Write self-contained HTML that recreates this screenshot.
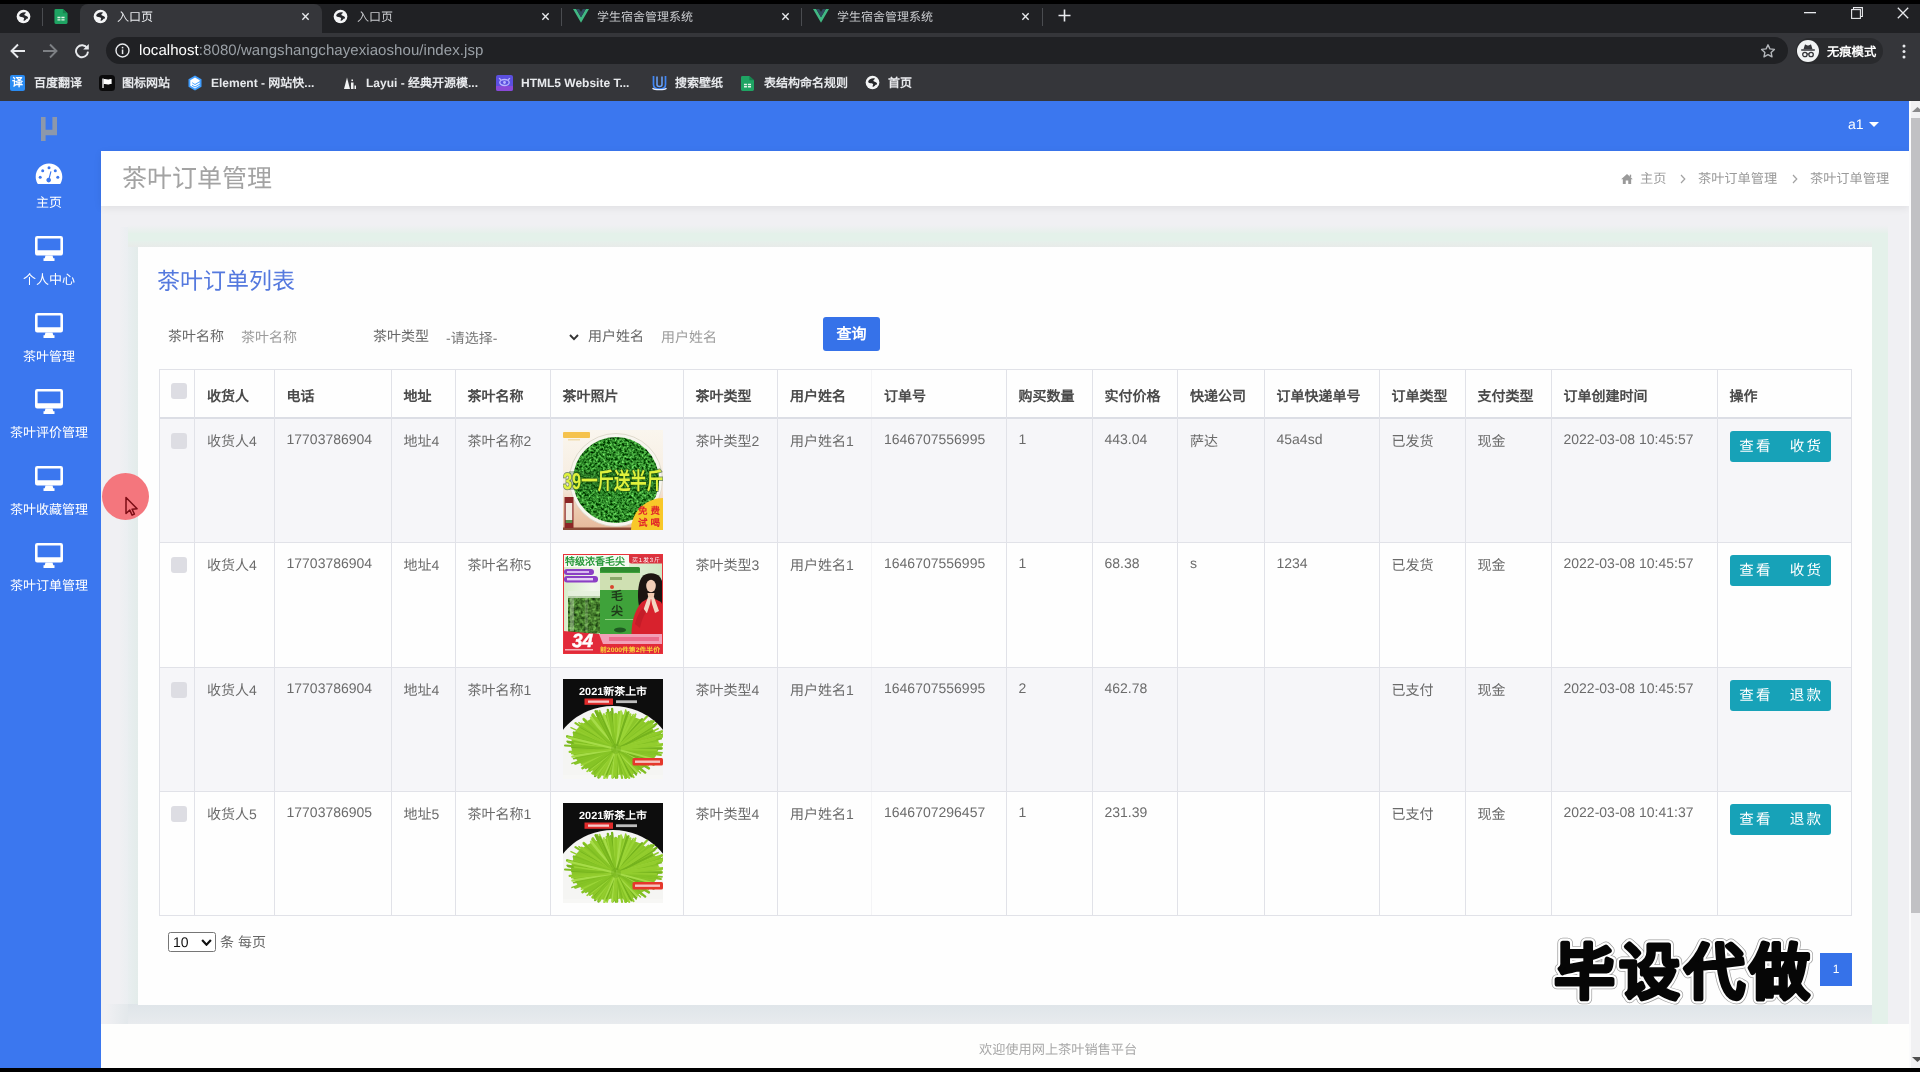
<!DOCTYPE html>
<html lang="zh-CN">
<head>
<meta charset="utf-8">
<title>茶叶订单管理</title>
<style>
*{box-sizing:border-box;margin:0;padding:0}
html,body{width:1920px;height:1072px;overflow:hidden;background:#000}
body{font-family:"Liberation Sans",sans-serif;position:relative;color:#333;-webkit-font-smoothing:antialiased;text-rendering:geometricPrecision}
.abs{position:absolute}
#root{position:absolute;left:0;top:0;width:1920px;height:1072px;overflow:hidden;background:#000;will-change:transform}
/* ===== browser chrome ===== */
#tabstrip{left:0;top:4px;width:1920px;height:30px;background:#202124}
#toolbar{left:0;top:33px;width:1920px;height:35px;background:#35363a}
#bookbar{left:0;top:67px;width:1920px;height:34px;background:#35363a}
.tab{top:4px;height:29px;color:#e8eaed;font-size:12px;line-height:25px}
.tab .ttl{position:absolute;top:1px;white-space:nowrap}
#omni{left:106px;top:37px;width:1682px;height:27px;border-radius:14px;background:#202124}
.bm{top:74px;height:18px;line-height:18px;font-size:12px;color:#e8eaed;white-space:nowrap;font-weight:bold}
/* ===== page ===== */
#page{left:0;top:101px;width:1909px;height:967px;background:#f0f0f3;overflow:hidden}
#topbar{left:0;top:0;width:1909px;height:50px;background:#3b77ef}
#side{left:0;top:0;width:101px;height:967px;background:#3b77ef}
.mi{left:0;width:98px;text-align:center;color:#fff;font-size:13px;line-height:16px;white-space:nowrap}
#titlebar{left:101px;top:50px;width:1808px;height:55px;background:#fff;box-shadow:0 2px 8px rgba(0,0,0,.07)}
#card{left:138px;top:146px;width:1734px;height:758px;background:#fefefe;}
.bc{top:69px;font-size:13.200px;line-height:18px;color:#9a9a9a;white-space:nowrap}

.fl{font-size:14px;line-height:20px;color:#666;white-space:nowrap}
.hl{left:159px;width:1693px;height:1px;background:#e1e2e8}
.vl{top:268px;width:1px;height:547px;background:#e1e2e8}
.th{font-size:14px;line-height:20px;font-weight:bold;color:#4a4a4a;white-space:nowrap}
.td{font-size:14px;line-height:20px;color:#6b6b6b;white-space:nowrap}
.cb{width:16px;height:16px;border-radius:3px;background:#dddde3}
.img{width:100px;height:100px;overflow:hidden;background:#8bb04a}
.btn{width:50px;height:31px;margin-top:1px;background:#17a2b8;color:#fff;font-size:14.500px;letter-spacing:2.300px;padding-left:2px;line-height:33px;text-align:center;white-space:nowrap}
.wm{left:1551px;top:923px;font-size:64px;line-height:94px;font-weight:bold;color:#050505;white-space:nowrap;letter-spacing:.5px;stroke-linejoin:round}
#footer{left:101px;top:923px;width:1808px;height:44px;background:#fefefd}
#scroll{left:1909px;top:101px;width:11px;height:967px;background:#f1f1f3}
</style>
</head>
<body>
<div id="root">
<!-- BROWSER CHROME -->
<div id="tabstrip" class="abs"></div>
<div id="toolbar" class="abs"></div>
<div id="bookbar" class="abs"></div>
<div id="omni" class="abs"></div>

<svg width="0" height="0" style="position:absolute">
 <defs>
  <symbol id="globe" viewBox="0 0 16 16">
   <circle cx="8" cy="8" r="7.300" fill="#f4f5f6"/>
   <path d="M3.400 6.800C3.800 4.600 7 3 10 3.400c.800.200.600 1-.200 1.500-1 .600-1.200 1.500-.200 2 1.200.500 2.800.700 3.200 2.100.200 1.200-.800 1.600-1.600 1.400-.600 1.200-1.600 2.200-2.800 2-.800-.200-.200-1.200.200-1.800.400-.800-.400-1.600-1.600-1.800-1.400-.200-3.800-.200-3.600-2z" fill="#26272b"/>
  </symbol>
  <symbol id="xx" viewBox="0 0 10 10"><path d="M1.500 1.500l7 7M8.500 1.500l-7 7" stroke="#e8eaed" stroke-width="1.500" fill="none"/></symbol>
  <symbol id="vue" viewBox="0 0 16 14"><path d="M0 0h3.200L8 8.300 12.800 0H16L8 13.800z" fill="#41b883"/><path d="M3.200 0h3L8 3.100 9.800 0h3L8 8.300z" fill="#2f495e"/></symbol>
  <symbol id="sheet" viewBox="0 0 14 16"><path d="M1.500 0H9l5 4.500V14.500a1.500 1.500 0 0 1-1.500 1.500h-11A1.500 1.500 0 0 1 0 14.500v-13A1.500 1.500 0 0 1 1.500 0z" fill="#1fa463"/><path d="M9 0l5 4.500H9z" fill="#16834d"/><path d="M3.200 8.300h3.200v1.500H3.200zm4.200 0h3.400v1.500H7.400zM3.200 10.800h3.200v1.500H3.200zm4.200 0h3.400v1.500H7.400z" fill="#e6f4ea"/></symbol>
 </defs>
</svg>
<!-- tabs -->
<svg class="abs" style="left:16px;top:9px" width="15" height="15"><use href="#globe"/></svg>
<div class="abs" style="left:42px;top:8px;width:1px;height:18px;background:#4a4c50"></div>
<svg class="abs" style="left:54px;top:8.500px" width="14" height="15"><use href="#sheet"/></svg>
<div class="abs" style="left:80px;top:4px;width:242px;height:30px;background:#35363a;border-radius:8px 8px 0 0"></div>
<svg class="abs" style="left:93px;top:9px" width="15" height="15"><use href="#globe"/></svg>
<div class="abs tab" style="left:117px"><span class="ttl">入口页</span></div>
<svg class="abs" style="left:301px;top:12px" width="9" height="9"><use href="#xx"/></svg>
<svg class="abs" style="left:333px;top:9px" width="15" height="15"><use href="#globe"/></svg>
<div class="abs tab" style="left:357px;color:#c8cacd"><span class="ttl">入口页</span></div>
<svg class="abs" style="left:541px;top:12px" width="9" height="9"><use href="#xx"/></svg>
<div class="abs" style="left:561px;top:8px;width:1px;height:18px;background:#4a4c50"></div>
<svg class="abs" style="left:573px;top:9px" width="16" height="14"><use href="#vue"/></svg>
<div class="abs tab" style="left:597px;color:#c8cacd"><span class="ttl">学生宿舍管理系统</span></div>
<svg class="abs" style="left:781px;top:12px" width="9" height="9"><use href="#xx"/></svg>
<div class="abs" style="left:801px;top:8px;width:1px;height:18px;background:#4a4c50"></div>
<svg class="abs" style="left:813px;top:9px" width="16" height="14"><use href="#vue"/></svg>
<div class="abs tab" style="left:837px;color:#c8cacd"><span class="ttl">学生宿舍管理系统</span></div>
<svg class="abs" style="left:1021px;top:12px" width="9" height="9"><use href="#xx"/></svg>
<div class="abs" style="left:1042px;top:8px;width:1px;height:18px;background:#4a4c50"></div>
<svg class="abs" style="left:1058px;top:9px" width="13" height="13" viewBox="0 0 13 13"><path d="M6.500 0.500v12M0.500 6.500h12" stroke="#e8eaed" stroke-width="1.600"/></svg>
<!-- window controls -->
<svg class="abs" style="left:1804px;top:12px" width="12" height="2"><rect width="12" height="1.300" fill="#e8eaed"/></svg>
<svg class="abs" style="left:1851px;top:7px" width="12" height="12" viewBox="0 0 12 12"><path d="M2.500 2.500V0.600h8.900v8.900H9.500" fill="none" stroke="#e8eaed" stroke-width="1.100"/><rect x="0.600" y="2.600" width="8.800" height="8.800" fill="none" stroke="#e8eaed" stroke-width="1.100"/></svg>
<svg class="abs" style="left:1897px;top:7px" width="12" height="12" viewBox="0 0 12 12"><path d="M0.800 0.800l10.400 10.400M11.200 0.800L0.800 11.200" stroke="#e8eaed" stroke-width="1.300"/></svg>
<!-- toolbar -->
<svg class="abs" style="left:10px;top:43px" width="16" height="16" viewBox="0 0 16 16"><path d="M15 8H2M8 1.500L1.500 8 8 14.500" fill="none" stroke="#e8eaed" stroke-width="1.900"/></svg>
<svg class="abs" style="left:42px;top:43px" width="16" height="16" viewBox="0 0 16 16"><path d="M1 8h13M8 1.500L14.500 8 8 14.500" fill="none" stroke="#7d8084" stroke-width="1.900"/></svg>
<svg class="abs" style="left:74px;top:43px" width="16" height="16" viewBox="0 0 16 16"><path d="M13.200 5.200A6 6 0 1 0 14 8.600" fill="none" stroke="#e8eaed" stroke-width="1.900"/><path d="M14.800 1v5.600H9.200z" fill="#e8eaed"/></svg>
<svg class="abs" style="left:115px;top:43px" width="15" height="15" viewBox="0 0 15 15"><circle cx="7.500" cy="7.500" r="6.500" fill="none" stroke="#e8eaed" stroke-width="1.400"/><rect x="6.800" y="6.500" width="1.500" height="4.600" fill="#e8eaed"/><rect x="6.800" y="3.800" width="1.500" height="1.600" fill="#e8eaed"/></svg>
<div class="abs" id="url" style="left:139px;top:41px;height:20px;line-height:20px;font-size:15px;letter-spacing:.07px;color:#fff;white-space:nowrap">localhost<span style="color:#9aa0a6">:8080/wangshangchayexiaoshou/index.jsp</span></div>
<svg class="abs" style="left:1760px;top:43px" width="16" height="16" viewBox="0 0 16 16"><path d="M8 1.800l1.900 4.100 4.500.500-3.300 3 .900 4.400L8 11.600l-4 2.200.900-4.400-3.300-3 4.500-.500z" fill="none" stroke="#b4b7bb" stroke-width="1.400" stroke-linejoin="round"/></svg>
<div class="abs" style="left:1796px;top:38px;width:87px;height:26px;border-radius:13px;background:#292a2d"></div>
<svg class="abs" style="left:1797px;top:40px" width="22" height="22" viewBox="0 0 22 22"><circle cx="11" cy="11" r="11" fill="#f1f3f4"/><path d="M6.500 9.300l1.300-4.200c.200-.500.600-.600 1-.400l1.100.500c.700.300 1.500.300 2.200 0l1.100-.500c.400-.200.800-.100 1 .400l1.300 4.200z" fill="#35363a"/><rect x="4" y="9.300" width="14" height="1.500" rx=".7" fill="#35363a"/><circle cx="7.900" cy="14.500" r="2.200" fill="none" stroke="#35363a" stroke-width="1.300"/><circle cx="14.100" cy="14.500" r="2.200" fill="none" stroke="#35363a" stroke-width="1.300"/><path d="M10 14.200c.600-.400 1.400-.400 2 0" fill="none" stroke="#35363a" stroke-width="1.200"/></svg>
<div class="abs" style="left:1827px;top:43px;font-size:12.300px;line-height:18px;color:#fff;font-weight:bold;white-space:nowrap">无痕模式</div>
<svg class="abs" style="left:1902px;top:44px" width="4" height="15" viewBox="0 0 4 15"><circle cx="2" cy="2" r="1.500" fill="#e8eaed"/><circle cx="2" cy="7.500" r="1.500" fill="#e8eaed"/><circle cx="2" cy="13" r="1.500" fill="#e8eaed"/></svg>
<!-- bookmarks -->
<div class="abs" style="left:10px;top:75px;width:15px;height:16px;background:#2a8bf2;border-radius:2px;color:#fff;font-size:11px;line-height:16px;text-align:center;font-weight:bold">译</div>
<div class="abs bm" style="left:34px">百度翻译</div>
<svg class="abs" style="left:99px;top:75px" width="16" height="16" viewBox="0 0 16 16"><rect width="16" height="16" rx="3.500" fill="#0b0b0c"/><path d="M4 3.500v9.500" stroke="#fff" stroke-width="1.300"/><path d="M4.600 4.200c2-.900 3.400.900 5.400.200 1-.300 1.700-.500 2.600-.300v5c-1-.200-1.700 0-2.600.300-2 .700-3.400-1.100-5.400-.200z" fill="#fff"/></svg>
<div class="abs bm" style="left:122px">图标网站</div>
<svg class="abs" style="left:187px;top:75px" width="16" height="16" viewBox="0 0 16 16"><path d="M8 .500l6.500 3.700v7.600L8 15.500 1.500 11.800V4.200z" fill="#409eff"/><path d="M8 2.600l4.700 2.700v.900L8 9 5 7.200v.900L8 9.900l4.700-2.700v1.600L8 11.500 5 9.800v.900l3 1.700 4.700-2.700v.900L8 13.400 3.300 10.700V5.300z" fill="#fff"/></svg>
<div class="abs bm" style="left:211px">Element - 网站快...</div>
<svg class="abs" style="left:344px;top:76px" width="13" height="14" viewBox="0 0 13 14"><path d="M0 13h6L3 1.500z" fill="#f1f3f4"/><path d="M7 13h2.500V6.500H7zM10.500 13H12V9.500h-1.500z" fill="#f1f3f4"/><rect x="7.400" y="3.500" width="1.600" height="1.600" fill="#f1f3f4"/></svg>
<div class="abs bm" style="left:366px">Layui - 经典开源模...</div>
<svg class="abs" style="left:496px;top:75px" width="17" height="16" viewBox="0 0 17 16"><rect width="17" height="16" rx="2" fill="#5b4fe0"/><path d="M0 11h17v3a2 2 0 0 1-2 2H2a2 2 0 0 1-2-2z" fill="#8a49d8"/><ellipse cx="8.500" cy="7.500" rx="4.700" ry="3" fill="none" stroke="#b9b4ff" stroke-width="1.300"/><circle cx="8.500" cy="7.500" r="1.400" fill="#b9b4ff"/><path d="M3 3.200l2 1.500M14 3.200l-2 1.500" stroke="#b9b4ff" stroke-width="1.200"/></svg>
<div class="abs bm" style="left:521px">HTML5 Website T...</div>
<svg class="abs" style="left:652px;top:75px" width="15" height="16" viewBox="0 0 15 16"><path d="M1.500 1v8.500c0 3 2.600 4.500 6 4.500s6-1.500 6-4.500V1" fill="none" stroke="#3f86f6" stroke-width="1.700"/><path d="M5 1.500v8c0 1.300 1 2 2.500 2s2.500-.700 2.500-2v-8" fill="none" stroke="#6aa5ff" stroke-width="1.500"/><path d="M.500 13.200c2 2 12 2 14 0" fill="none" stroke="#dfeaff" stroke-width="1.300"/></svg>
<div class="abs bm" style="left:675px">搜索壁纸</div>
<svg class="abs" style="left:741px;top:76px" width="13" height="15"><use href="#sheet"/></svg>
<div class="abs bm" style="left:764px">表结构命名规则</div>
<svg class="abs" style="left:865px;top:75px" width="15" height="15"><use href="#globe"/></svg>
<div class="abs bm" style="left:888px">首页</div>

<!--CHROME-CONTENT-->

<svg width="0" height="0" style="position:absolute"><defs><symbol id="tea3" viewBox="0 0 100 100">
<rect width="100" height="100" fill="#0d0d0d"/>
<ellipse cx="50" cy="90" rx="64" ry="63" fill="#f5f5f3"/>
<rect x="0" y="96" width="100" height="4" fill="#f7f7f5"/>
<ellipse cx="52" cy="65.500" rx="44" ry="30.500" fill="#8bc62a"/>
<g stroke-linecap="round" fill="none"><path d="M54.9 73.3L68.9 96.9" stroke="#86c426" stroke-width="2.6"/><path d="M58.8 69.6L97.6 67.1" stroke="#7fbd22" stroke-width="2.1"/><path d="M53.2 72.2L55.2 94.7" stroke="#a6dc48" stroke-width="2.0"/><path d="M56.4 74.4L73.2 96.0" stroke="#74b21d" stroke-width="1.5"/><path d="M58.2 69.9L100.0 69.3" stroke="#a6dc48" stroke-width="2.0"/><path d="M57.0 68.9L96.9 57.8" stroke="#74b21d" stroke-width="2.7"/><path d="M49.7 73.6L32.4 92.3" stroke="#8fca2a" stroke-width="2.5"/><path d="M57.3 70.5L92.6 74.9" stroke="#86c426" stroke-width="2.1"/><path d="M55.0 74.8L63.0 94.0" stroke="#7fbd22" stroke-width="1.5"/><path d="M54.6 74.6L62.6 98.1" stroke="#74b21d" stroke-width="2.5"/><path d="M53.4 65.6L56.0 33.1" stroke="#8fca2a" stroke-width="2.2"/><path d="M51.1 69.3L10.9 53.7" stroke="#7fbd22" stroke-width="2.6"/><path d="M50.7 71.5L22.8 89.3" stroke="#86c426" stroke-width="1.8"/><path d="M48.0 70.5L10.3 74.2" stroke="#7fbd22" stroke-width="2.4"/><path d="M55.9 69.9L97.7 68.0" stroke="#a6dc48" stroke-width="2.2"/><path d="M51.1 69.7L5.6 63.4" stroke="#a6dc48" stroke-width="1.6"/><path d="M50.6 65.6L33.8 35.2" stroke="#9ad436" stroke-width="1.9"/><path d="M52.5 69.6L18.7 46.0" stroke="#8fca2a" stroke-width="2.7"/><path d="M53.4 70.9L66.4 95.8" stroke="#8fca2a" stroke-width="2.3"/><path d="M55.0 68.5L90.4 42.4" stroke="#7fbd22" stroke-width="2.7"/><path d="M50.5 68.4L12.5 44.1" stroke="#86c426" stroke-width="2.3"/><path d="M56.1 68.7L91.6 53.7" stroke="#86c426" stroke-width="2.5"/><path d="M53.8 65.0L58.4 34.1" stroke="#8fca2a" stroke-width="2.6"/><path d="M52.2 68.7L33.8 40.4" stroke="#86c426" stroke-width="1.5"/><path d="M49.9 75.0L35.5 98.4" stroke="#74b21d" stroke-width="2.4"/><path d="M56.7 71.2L88.3 81.3" stroke="#74b21d" stroke-width="2.1"/><path d="M55.1 69.4L99.9 55.7" stroke="#7fbd22" stroke-width="2.6"/><path d="M50.2 67.9L18.7 44.6" stroke="#93cd2e" stroke-width="2.1"/><path d="M53.5 70.6L73.7 94.7" stroke="#74b21d" stroke-width="1.4"/><path d="M52.9 69.9L36.5 31.7" stroke="#a6dc48" stroke-width="1.9"/><path d="M53.0 72.5L53.0 99.0" stroke="#74b21d" stroke-width="2.0"/><path d="M53.8 69.8L100.6 57.4" stroke="#8fca2a" stroke-width="2.0"/><path d="M54.8 74.3L64.6 97.6" stroke="#8fca2a" stroke-width="2.6"/><path d="M51.2 67.3L32.7 40.0" stroke="#9ad436" stroke-width="2.0"/><path d="M53.8 69.3L85.5 42.4" stroke="#93cd2e" stroke-width="1.9"/><path d="M52.9 69.7L43.7 33.7" stroke="#74b21d" stroke-width="2.1"/><path d="M52.8 64.4L52.1 37.2" stroke="#86c426" stroke-width="2.0"/><path d="M54.0 70.4L90.8 85.9" stroke="#74b21d" stroke-width="1.7"/><path d="M57.4 69.0L98.1 59.6" stroke="#7fbd22" stroke-width="1.9"/><path d="M52.4 71.6L41.4 99.0" stroke="#a6dc48" stroke-width="2.5"/><path d="M49.7 70.2L6.6 72.9" stroke="#8fca2a" stroke-width="2.1"/><path d="M52.8 68.1L49.1 29.9" stroke="#74b21d" stroke-width="2.3"/><path d="M53.2 66.3L54.7 36.2" stroke="#9ad436" stroke-width="2.8"/><path d="M49.3 74.7L34.3 94.1" stroke="#8fca2a" stroke-width="2.6"/><path d="M50.2 66.0L29.3 36.7" stroke="#86c426" stroke-width="2.1"/><path d="M57.0 68.6L97.1 54.8" stroke="#86c426" stroke-width="2.1"/><path d="M52.0 70.9L26.8 91.8" stroke="#8fca2a" stroke-width="2.3"/><path d="M56.4 70.9L90.6 80.2" stroke="#86c426" stroke-width="2.4"/><path d="M50.8 70.6L14.6 80.9" stroke="#86c426" stroke-width="1.7"/><path d="M53.2 69.9L91.5 47.2" stroke="#7fbd22" stroke-width="2.1"/><path d="M52.0 65.4L44.8 30.8" stroke="#74b21d" stroke-width="2.3"/><path d="M50.3 67.5L20.7 39.9" stroke="#93cd2e" stroke-width="2.4"/><path d="M53.1 72.3L53.9 99.0" stroke="#a6dc48" stroke-width="1.9"/><path d="M47.6 69.2L4.2 62.5" stroke="#7fbd22" stroke-width="1.8"/><path d="M52.7 70.8L42.2 96.4" stroke="#a6dc48" stroke-width="1.6"/><path d="M50.8 69.7L5.1 63.2" stroke="#74b21d" stroke-width="2.0"/><path d="M56.3 72.7L82.2 93.6" stroke="#7fbd22" stroke-width="2.4"/><path d="M52.2 70.8L29.6 94.3" stroke="#8fca2a" stroke-width="2.7"/><path d="M50.8 74.6L40.7 95.3" stroke="#7fbd22" stroke-width="2.7"/><path d="M48.9 69.8L9.0 68.1" stroke="#74b21d" stroke-width="1.9"/><path d="M55.4 69.0L94.3 53.9" stroke="#a6dc48" stroke-width="2.3"/><path d="M51.2 66.7L33.6 34.9" stroke="#8fca2a" stroke-width="1.7"/><path d="M57.7 68.8L92.3 60.1" stroke="#93cd2e" stroke-width="2.4"/><path d="M53.2 70.0L95.9 75.1" stroke="#a6dc48" stroke-width="2.0"/><path d="M47.6 71.8L9.0 84.4" stroke="#7fbd22" stroke-width="1.5"/><path d="M51.1 75.0L42.6 96.9" stroke="#9ad436" stroke-width="1.6"/><path d="M50.7 68.9L8.0 48.6" stroke="#93cd2e" stroke-width="1.5"/><path d="M54.3 73.1L63.8 96.2" stroke="#7fbd22" stroke-width="2.2"/><path d="M54.3 67.5L70.2 35.5" stroke="#93cd2e" stroke-width="1.4"/><path d="M48.3 67.3L17.6 49.9" stroke="#74b21d" stroke-width="2.8"/><path d="M51.4 67.5L33.2 39.6" stroke="#a6dc48" stroke-width="2.2"/><path d="M49.5 66.7L22.7 41.4" stroke="#9ad436" stroke-width="1.6"/><path d="M55.2 73.2L69.6 94.0" stroke="#8fca2a" stroke-width="2.6"/><path d="M55.8 71.3L83.9 84.8" stroke="#74b21d" stroke-width="2.6"/><path d="M52.4 70.7L33.1 94.0" stroke="#a6dc48" stroke-width="2.1"/><path d="M52.6 69.1L36.4 34.2" stroke="#8fca2a" stroke-width="1.7"/><path d="M52.2 70.9L33.9 93.5" stroke="#7fbd22" stroke-width="2.4"/><path d="M48.1 69.2L10.8 63.4" stroke="#7fbd22" stroke-width="2.1"/><path d="M52.5 66.2L47.8 32.9" stroke="#74b21d" stroke-width="1.6"/><path d="M52.8 69.1L43.7 34.2" stroke="#93cd2e" stroke-width="2.0"/><path d="M53.3 70.0L93.8 74.8" stroke="#74b21d" stroke-width="2.5"/><path d="M57.5 66.9L88.1 45.5" stroke="#9ad436" stroke-width="1.9"/><path d="M57.4 68.3L98.8 52.5" stroke="#8fca2a" stroke-width="2.7"/><path d="M53.1 70.1L66.0 94.8" stroke="#86c426" stroke-width="2.3"/><path d="M54.7 72.7L70.5 98.1" stroke="#86c426" stroke-width="1.7"/><path d="M57.7 69.9L98.1 69.5" stroke="#74b21d" stroke-width="2.5"/><path d="M54.4 69.6L100.3 56.3" stroke="#a6dc48" stroke-width="1.6"/><path d="M50.9 69.5L4.3 57.5" stroke="#7fbd22" stroke-width="2.8"/><path d="M56.9 67.6L93.3 45.0" stroke="#74b21d" stroke-width="2.4"/><path d="M52.8 66.8L51.2 35.9" stroke="#9ad436" stroke-width="2.7"/><path d="M51.6 69.9L10.1 66.2" stroke="#86c426" stroke-width="2.3"/><path d="M51.9 70.3L10.7 79.6" stroke="#7fbd22" stroke-width="1.8"/><path d="M50.3 71.2L18.3 86.3" stroke="#9ad436" stroke-width="1.5"/><path d="M56.0 66.3L76.4 41.3" stroke="#9ad436" stroke-width="2.2"/><path d="M54.4 65.9L65.7 33.1" stroke="#7fbd22" stroke-width="1.9"/><path d="M49.9 72.5L28.4 89.4" stroke="#a6dc48" stroke-width="1.8"/><path d="M54.4 67.5L71.7 37.1" stroke="#93cd2e" stroke-width="2.4"/><path d="M53.1 69.7L67.2 35.6" stroke="#9ad436" stroke-width="2.7"/><path d="M54.4 71.6L73.8 92.8" stroke="#a6dc48" stroke-width="2.3"/><path d="M48.8 67.0L15.9 43.6" stroke="#93cd2e" stroke-width="1.5"/><path d="M51.5 67.7L29.8 35.5" stroke="#8fca2a" stroke-width="2.7"/><path d="M54.7 75.1L62.7 99.0" stroke="#8fca2a" stroke-width="2.4"/><path d="M53.0 74.5L53.2 95.6" stroke="#9ad436" stroke-width="1.5"/><path d="M50.7 67.9L20.7 40.8" stroke="#7fbd22" stroke-width="2.1"/><path d="M52.1 66.0L45.0 36.3" stroke="#9ad436" stroke-width="2.7"/><path d="M48.0 69.3L11.4 64.1" stroke="#9ad436" stroke-width="1.5"/><path d="M52.8 69.3L40.8 35.3" stroke="#a6dc48" stroke-width="2.3"/><path d="M56.5 70.5L97.8 76.0" stroke="#86c426" stroke-width="2.1"/><path d="M50.5 69.4L6.7 58.9" stroke="#8fca2a" stroke-width="2.3"/><path d="M50.0 73.4L32.0 93.6" stroke="#74b21d" stroke-width="2.3"/><path d="M52.5 67.4L45.7 33.2" stroke="#7fbd22" stroke-width="1.4"/><path d="M52.2 69.0L28.2 38.7" stroke="#a6dc48" stroke-width="2.7"/><path d="M53.0 69.1L52.8 34.9" stroke="#8fca2a" stroke-width="2.5"/><path d="M52.4 71.1L39.6 95.5" stroke="#8fca2a" stroke-width="2.0"/><path d="M53.3 70.9L60.6 94.2" stroke="#7fbd22" stroke-width="1.7"/><path d="M53.5 70.4L79.0 92.0" stroke="#86c426" stroke-width="1.6"/><path d="M53.9 70.9L77.4 94.0" stroke="#8fca2a" stroke-width="1.5"/><path d="M53.0 70.6L54.3 98.5" stroke="#7fbd22" stroke-width="2.0"/><path d="M54.0 65.9L62.7 31.0" stroke="#93cd2e" stroke-width="1.4"/><path d="M51.2 75.2L44.0 96.2" stroke="#9ad436" stroke-width="2.6"/><path d="M52.8 70.1L19.5 89.1" stroke="#86c426" stroke-width="2.5"/><path d="M48.1 67.3L16.3 49.9" stroke="#8fca2a" stroke-width="2.5"/><path d="M52.9 71.6L51.8 97.7" stroke="#93cd2e" stroke-width="1.6"/><path d="M50.9 73.3L35.7 96.9" stroke="#86c426" stroke-width="2.7"/><path d="M52.1 73.4L46.0 95.2" stroke="#86c426" stroke-width="1.9"/><path d="M53.2 69.1L63.4 32.5" stroke="#9ad436" stroke-width="1.9"/><path d="M52.3 75.4L49.4 98.9" stroke="#8fca2a" stroke-width="1.9"/><path d="M55.7 66.9L79.1 40.5" stroke="#74b21d" stroke-width="2.8"/><path d="M53.9 74.3L59.1 99.0" stroke="#8fca2a" stroke-width="2.1"/><path d="M52.6 71.1L43.6 96.3" stroke="#8fca2a" stroke-width="2.0"/><path d="M53.4 71.2L60.9 94.3" stroke="#93cd2e" stroke-width="2.7"/><path d="M58.1 70.4L99.1 73.8" stroke="#86c426" stroke-width="1.7"/><path d="M52.3 70.9L32.1 97.1" stroke="#74b21d" stroke-width="2.2"/><path d="M54.4 67.5L72.6 35.3" stroke="#9ad436" stroke-width="1.9"/><path d="M54.4 69.0L88.9 44.8" stroke="#93cd2e" stroke-width="2.5"/><path d="M50.6 65.3L34.0 32.2" stroke="#7fbd22" stroke-width="2.4"/><path d="M51.4 74.6L43.2 97.7" stroke="#93cd2e" stroke-width="1.6"/><path d="M51.7 71.0L24.1 92.3" stroke="#9ad436" stroke-width="1.7"/><path d="M54.4 69.9L100.5 65.3" stroke="#8fca2a" stroke-width="2.6"/><path d="M57.6 66.4L88.2 42.2" stroke="#86c426" stroke-width="2.3"/><path d="M52.5 69.1L34.6 38.6" stroke="#86c426" stroke-width="1.9"/><path d="M55.8 68.6L95.1 49.7" stroke="#8fca2a" stroke-width="1.6"/><path d="M55.7 70.1L93.2 71.0" stroke="#93cd2e" stroke-width="2.1"/><path d="M53.9 70.5L85.2 86.3" stroke="#a6dc48" stroke-width="1.8"/><path d="M50.7 70.8L12.3 84.4" stroke="#86c426" stroke-width="2.7"/><path d="M53.0 70.0L11.3 55.2" stroke="#86c426" stroke-width="2.6"/><path d="M56.7 69.5L95.4 64.5" stroke="#9ad436" stroke-width="2.6"/><path d="M52.7 73.2L50.4 96.9" stroke="#74b21d" stroke-width="2.7"/><path d="M50.1 73.9L33.5 96.0" stroke="#9ad436" stroke-width="2.5"/><path d="M53.1 70.2L70.6 98.3" stroke="#93cd2e" stroke-width="1.9"/><path d="M54.1 74.7L58.8 94.6" stroke="#7fbd22" stroke-width="1.9"/><path d="M52.7 69.3L38.4 37.4" stroke="#9ad436" stroke-width="2.3"/><path d="M53.3 70.5L68.4 97.5" stroke="#74b21d" stroke-width="1.8"/><path d="M53.0 72.4L52.5 96.1" stroke="#93cd2e" stroke-width="2.5"/><path d="M52.9 70.2L44.0 99.0" stroke="#9ad436" stroke-width="1.8"/><path d="M51.2 74.9L43.5 96.9" stroke="#8fca2a" stroke-width="2.3"/><path d="M56.5 67.5L86.9 45.3" stroke="#93cd2e" stroke-width="1.7"/><path d="M52.9 69.7L46.1 34.4" stroke="#86c426" stroke-width="2.7"/><path d="M55.5 71.5L85.9 89.4" stroke="#7fbd22" stroke-width="2.5"/><path d="M53.0 70.0L90.1 46.3" stroke="#93cd2e" stroke-width="1.4"/><path d="M51.6 73.5L43.2 95.0" stroke="#74b21d" stroke-width="2.6"/><path d="M57.0 65.8L84.0 37.6" stroke="#8fca2a" stroke-width="2.2"/><path d="M51.4 71.8L31.3 95.1" stroke="#86c426" stroke-width="2.1"/><path d="M52.6 73.8L50.3 98.3" stroke="#7fbd22" stroke-width="1.8"/><path d="M57.9 67.6L89.3 52.1" stroke="#74b21d" stroke-width="1.8"/><path d="M52.8 73.2L51.0 97.0" stroke="#8fca2a" stroke-width="1.9"/><path d="M49.2 69.7L2.0 66.6" stroke="#7fbd22" stroke-width="2.0"/><path d="M51.6 70.2L9.3 77.6" stroke="#a6dc48" stroke-width="2.1"/><path d="M53.3 68.1L58.1 32.4" stroke="#a6dc48" stroke-width="2.2"/><path d="M51.6 70.1L8.8 74.6" stroke="#93cd2e" stroke-width="1.8"/><path d="M51.5 67.2L32.8 32.4" stroke="#7fbd22" stroke-width="1.5"/><path d="M52.3 65.6L47.2 35.7" stroke="#86c426" stroke-width="2.2"/><path d="M52.9 70.5L49.4 97.8" stroke="#a6dc48" stroke-width="2.3"/><path d="M51.8 68.7L26.9 42.6" stroke="#8fca2a" stroke-width="1.7"/><path d="M50.0 69.3L5.3 58.4" stroke="#a6dc48" stroke-width="2.1"/><path d="M54.1 66.3L64.3 33.7" stroke="#74b21d" stroke-width="2.0"/><path d="M52.4 68.6L37.0 33.9" stroke="#74b21d" stroke-width="1.7"/><path d="M55.1 75.4L63.7 98.2" stroke="#86c426" stroke-width="1.7"/><path d="M50.3 65.1L32.5 32.3" stroke="#74b21d" stroke-width="2.3"/><path d="M49.5 72.6L25.9 90.4" stroke="#7fbd22" stroke-width="1.5"/><path d="M51.7 71.6L32.6 94.0" stroke="#86c426" stroke-width="2.1"/><path d="M52.5 75.4L50.8 95.8" stroke="#93cd2e" stroke-width="1.7"/><path d="M52.3 71.2L36.5 98.0" stroke="#93cd2e" stroke-width="2.2"/><path d="M50.8 75.1L41.2 97.1" stroke="#a6dc48" stroke-width="1.5"/><path d="M55.8 69.2L99.8 56.9" stroke="#93cd2e" stroke-width="2.2"/><path d="M53.9 72.1L66.3 99.0" stroke="#9ad436" stroke-width="2.0"/><path d="M54.1 70.3L89.7 79.9" stroke="#a6dc48" stroke-width="1.9"/><path d="M49.6 66.6L26.0 42.7" stroke="#86c426" stroke-width="1.9"/><path d="M51.5 67.3L36.0 38.2" stroke="#7fbd22" stroke-width="1.5"/><path d="M58.8 69.3L93.3 65.0" stroke="#93cd2e" stroke-width="2.3"/></g>
<circle cx="53" cy="70" r="5" fill="#6fae1c" opacity=".5"/>
<text x="16" y="16" font-size="10.500" font-weight="bold" fill="#fff" textLength="68" lengthAdjust="spacingAndGlyphs" font-family='"Liberation Sans", sans-serif'>2021新茶上市</text>
<rect x="21.500" y="19.500" width="28.500" height="6.300" fill="#e02b2b"/><rect x="25" y="21.500" width="21" height="2.300" fill="#f6c9c9"/>
<rect x="53" y="21.300" width="21" height="2.800" fill="#bdbdbd"/>
<rect x="69.500" y="79" width="30.500" height="7.400" rx="1.500" fill="#e5382c"/><rect x="72" y="81.500" width="25" height="2.400" fill="#f5c5c0"/>
</symbol></defs></svg>
<!-- PAGE -->
<div id="page" class="abs">
  <div id="topbar" class="abs"></div>
  <div id="side" class="abs"></div>
  <div id="titlebar" class="abs"></div>
  <div class="abs" style="left:119px;top:126px;width:10px;height:797px;background:linear-gradient(90deg,#f0f0f3,#eaeef1)"></div>
  <div class="abs" style="left:128px;top:126px;width:1760px;height:797px;background:#e4f1ea"></div>
  <div class="abs" style="left:128px;top:124px;width:1760px;height:8px;background:linear-gradient(#f0f0f3,#e6f0eb)"></div>
  <div class="abs" style="left:128px;top:140px;width:1744px;height:6px;background:linear-gradient(#e6f0eb,#e8ebe9)"></div>
  <div class="abs" style="left:128px;top:903px;width:1744px;height:20px;background:linear-gradient(#dfe5e9,#e8ebee)"></div>
  <div class="abs" style="left:106px;top:903px;width:22px;height:20px;background:linear-gradient(90deg,#f0f0f3,#e3e8eb)"></div>
  <div class="abs" style="left:128px;top:146px;width:10px;height:757px;background:linear-gradient(90deg,#e9eef0,#e3ecea)"></div>
  <div id="card" class="abs"></div>
  <div id="footer" class="abs"></div>
  
<!-- logo -->
<svg class="abs" style="left:41px;top:16px" width="16" height="24" viewBox="0 0 16 24"><path d="M0 0h4.600v12.800h6.800V0H16v18.200H4.600V24H0z" fill="#8d98ab"/></svg>
<!-- dashboard icon -->
<svg class="abs" style="left:35px;top:62px" width="28" height="22" viewBox="0 0 28 22"><path d="M14 .600c7.400 0 13.300 5.900 13.300 13.200 0 2.300-.600 4.500-1.600 6.400-.300.600-.900.900-1.500.900H3.800c-.600 0-1.200-.300-1.500-.900C1.300 18.300.700 16.100.700 13.800.700 6.500 6.600.600 14 .600z" fill="#fff"/><circle cx="5.200" cy="14.300" r="1.500" fill="#3b77ef"/><circle cx="7.700" cy="7.700" r="1.500" fill="#3b77ef"/><circle cx="14" cy="4.800" r="1.500" fill="#3b77ef"/><circle cx="20.300" cy="7.700" r="1.500" fill="#3b77ef"/><circle cx="22.800" cy="14.300" r="1.500" fill="#3b77ef"/><path d="M15.400 8.200l1.100.300-1.700 6.600a2.300 2.300 0 1 1-1.100-.300z" fill="#3b77ef"/></svg>
<div class="abs mi" style="top:94px">主页</div>
<svg class="abs" style="left:35px;top:135px" width="28" height="25" viewBox="0 0 28 25"><path d="M2.200 0h23.600A2.200 2.200 0 0 1 28 2.200v15.100a2.200 2.200 0 0 1-2.200 2.200H2.200A2.200 2.200 0 0 1 0 17.300V2.200A2.200 2.200 0 0 1 2.200 0zM2.600 2.500v11.700h22.800V2.500z" fill="#fff" fill-rule="evenodd"/><path d="M10.500 19.500h7l.8 2.800h1.200V25H8.500v-2.700h1.200z" fill="#fff"/></svg>
<div class="abs mi" style="top:171px">个人中心</div>
<svg class="abs" style="left:35px;top:212px" width="28" height="25" viewBox="0 0 28 25"><path d="M2.200 0h23.600A2.200 2.200 0 0 1 28 2.200v15.100a2.200 2.200 0 0 1-2.200 2.200H2.200A2.200 2.200 0 0 1 0 17.300V2.200A2.200 2.200 0 0 1 2.200 0zM2.600 2.500v11.700h22.800V2.500z" fill="#fff" fill-rule="evenodd"/><path d="M10.500 19.500h7l.8 2.800h1.200V25H8.500v-2.700h1.200z" fill="#fff"/></svg>
<div class="abs mi" style="top:248px">茶叶管理</div>
<svg class="abs" style="left:35px;top:288px" width="28" height="25" viewBox="0 0 28 25"><path d="M2.200 0h23.600A2.200 2.200 0 0 1 28 2.200v15.100a2.200 2.200 0 0 1-2.200 2.200H2.200A2.200 2.200 0 0 1 0 17.300V2.200A2.200 2.200 0 0 1 2.200 0zM2.600 2.500v11.700h22.800V2.500z" fill="#fff" fill-rule="evenodd"/><path d="M10.500 19.500h7l.8 2.800h1.200V25H8.500v-2.700h1.200z" fill="#fff"/></svg>
<div class="abs mi" style="top:324px">茶叶评价管理</div>
<svg class="abs" style="left:35px;top:365px" width="28" height="25" viewBox="0 0 28 25"><path d="M2.200 0h23.600A2.200 2.200 0 0 1 28 2.200v15.100a2.200 2.200 0 0 1-2.200 2.200H2.200A2.200 2.200 0 0 1 0 17.300V2.200A2.200 2.200 0 0 1 2.200 0zM2.600 2.500v11.700h22.800V2.500z" fill="#fff" fill-rule="evenodd"/><path d="M10.500 19.500h7l.8 2.800h1.200V25H8.500v-2.700h1.200z" fill="#fff"/></svg>
<div class="abs mi" style="top:401px">茶叶收藏管理</div>
<svg class="abs" style="left:35px;top:442px" width="28" height="25" viewBox="0 0 28 25"><path d="M2.200 0h23.600A2.200 2.200 0 0 1 28 2.200v15.100a2.200 2.200 0 0 1-2.200 2.200H2.200A2.200 2.200 0 0 1 0 17.300V2.200A2.200 2.200 0 0 1 2.200 0zM2.600 2.500v11.700h22.800V2.500z" fill="#fff" fill-rule="evenodd"/><path d="M10.500 19.500h7l.8 2.800h1.200V25H8.500v-2.700h1.200z" fill="#fff"/></svg>
<div class="abs mi" style="top:477px">茶叶订单管理</div>

<!-- top right user -->
<div class="abs" style="left:1848px;top:14px;font-size:14px;line-height:18px;color:#fff;white-space:nowrap">a1</div>
<svg class="abs" style="left:1869px;top:21px" width="10" height="5" viewBox="0 0 10 5"><path d="M0 0h10L5 5z" fill="#fff"/></svg>
<!-- title -->
<div class="abs" style="left:122px;top:62px;font-size:25px;line-height:32px;color:#a3a3a3;white-space:nowrap;letter-spacing:0">茶叶订单管理</div>
<!-- breadcrumb -->
<svg class="abs" style="left:1621px;top:72.500px" width="12" height="10" viewBox="0 0 14 12"><path d="M7 0l7 6.200h-2V12H8.500V7.800h-3V12H2V6.200H0z" fill="#9a9a9a"/><rect x="10.300" y=".800" width="1.700" height="3" fill="#9a9a9a"/></svg>
<div class="abs bc" style="left:1640px">主页</div>
<svg class="abs" style="left:1680px;top:73px" width="6" height="10" viewBox="0 0 6 10"><path d="M1 1l3.800 4L1 9" fill="none" stroke="#a2a2a2" stroke-width="1.200"/></svg>
<div class="abs bc" style="left:1698px">茶叶订单管理</div>
<svg class="abs" style="left:1792px;top:73px" width="6" height="10" viewBox="0 0 6 10"><path d="M1 1l3.800 4L1 9" fill="none" stroke="#a2a2a2" stroke-width="1.200"/></svg>
<div class="abs bc" style="left:1810px">茶叶订单管理</div>
<!-- footer text -->
<div class="abs" style="left:979px;top:941px;font-size:13.200px;line-height:16px;color:#a8a8a8;white-space:nowrap">欢迎使用网上茶叶销售平台</div>

<div class="abs" style="left:157px;top:165px;font-size:23px;line-height:30px;color:#5579de;white-space:nowrap">茶叶订单列表</div>
<div class="abs fl" style="left:168px;top:225px">茶叶名称</div>
<div class="abs fl" style="left:241px;top:226px;color:#9c9c9c">茶叶名称</div>
<div class="abs fl" style="left:373px;top:225px">茶叶类型</div>
<div class="abs fl" style="left:446px;top:227px;color:#777;font-size:14px">-请选择-</div>
<svg class="abs" style="left:569px;top:233px" width="10" height="7" viewBox="0 0 10 7"><path d="M1 1l4 4.200L9 1" fill="none" stroke="#333" stroke-width="1.900"/></svg>
<div class="abs fl" style="left:588px;top:225px">用户姓名</div>
<div class="abs fl" style="left:661px;top:226px;color:#9c9c9c">用户姓名</div>
<div class="abs" style="left:823px;top:216px;width:57px;height:34px;border-radius:3px;background:#3672e9;color:#fff;font-size:15px;font-weight:bold;line-height:36px;text-align:center">查询</div>
<div class="abs" style="left:159px;top:317px;width:1693px;height:124px;background:#f6f6f9"></div>
<div class="abs" style="left:159px;top:566px;width:1693px;height:124px;background:#f6f6f9"></div>
<div class="abs hl" style="top:268px"></div>
<div class="abs hl" style="top:316px;height:2px;background:#dcdee5"></div>
<div class="abs hl" style="top:441px"></div>
<div class="abs hl" style="top:566px"></div>
<div class="abs hl" style="top:690px"></div>
<div class="abs hl" style="top:814px"></div>
<div class="abs vl" style="left:158.5px"></div>
<div class="abs vl" style="left:194.0px"></div>
<div class="abs vl" style="left:273.5px"></div>
<div class="abs vl" style="left:390.5px"></div>
<div class="abs vl" style="left:454.5px"></div>
<div class="abs vl" style="left:549.5px"></div>
<div class="abs vl" style="left:682.5px"></div>
<div class="abs vl" style="left:777.0px"></div>
<div class="abs vl" style="left:871.0px;opacity:.35"></div>
<div class="abs vl" style="left:1005.5px"></div>
<div class="abs vl" style="left:1091.5px"></div>
<div class="abs vl" style="left:1177.0px"></div>
<div class="abs vl" style="left:1263.5px"></div>
<div class="abs vl" style="left:1378.5px"></div>
<div class="abs vl" style="left:1464.5px"></div>
<div class="abs vl" style="left:1550.5px"></div>
<div class="abs vl" style="left:1716.5px"></div>
<div class="abs vl" style="left:1851.0px"></div>
<div class="abs th" style="left:207.0px;top:285px">收货人</div>
<div class="abs th" style="left:286.5px;top:285px">电话</div>
<div class="abs th" style="left:403.5px;top:285px">地址</div>
<div class="abs th" style="left:467.5px;top:285px">茶叶名称</div>
<div class="abs th" style="left:562.5px;top:285px">茶叶照片</div>
<div class="abs th" style="left:695.5px;top:285px">茶叶类型</div>
<div class="abs th" style="left:790.0px;top:285px">用户姓名</div>
<div class="abs th" style="left:884.0px;top:285px">订单号</div>
<div class="abs th" style="left:1018.5px;top:285px">购买数量</div>
<div class="abs th" style="left:1104.5px;top:285px">实付价格</div>
<div class="abs th" style="left:1190.0px;top:285px">快递公司</div>
<div class="abs th" style="left:1276.5px;top:285px">订单快递单号</div>
<div class="abs th" style="left:1391.5px;top:285px">订单类型</div>
<div class="abs th" style="left:1477.5px;top:285px">支付类型</div>
<div class="abs th" style="left:1563.5px;top:285px">订单创建时间</div>
<div class="abs th" style="left:1729.5px;top:285px">操作</div>
<div class="abs cb" style="left:171px;top:282px"></div>
<div class="abs cb" style="left:171px;top:332px"></div>
<div class="abs cb" style="left:171px;top:456px"></div>
<div class="abs cb" style="left:171px;top:581px"></div>
<div class="abs cb" style="left:171px;top:705px"></div>
<div class="abs td" style="left:207.0px;top:330px">收货人4</div>
<div class="abs td" style="left:286.5px;top:328px">17703786904</div>
<div class="abs td" style="left:403.5px;top:330px">地址4</div>
<div class="abs td" style="left:467.5px;top:330px">茶叶名称2</div>
<div class="abs img" id="img1" style="left:563px;top:329px"><svg width="100" height="100" viewBox="0 0 100 100" font-family='"Liberation Sans", sans-serif'>
<defs>
<filter id="f1" x="0" y="0" width="1" height="1" color-interpolation-filters="sRGB"><feTurbulence type="fractalNoise" baseFrequency=".42" numOctaves="2" seed="7" result="n"/><feColorMatrix in="n" type="matrix" values=".9 0 0 0 -.27  1.3 0 0 0 -.12  .8 0 0 0 -.24  0 0 0 0 1" result="c"/><feComposite in="c" in2="SourceGraphic" operator="in"/></filter>
<linearGradient id="g1" x1="0" y1="0" x2="0" y2="1"><stop offset="0" stop-color="#faf6ee"/><stop offset=".55" stop-color="#f6ece0"/><stop offset=".8" stop-color="#ecc9ae"/><stop offset="1" stop-color="#e6b99b"/></linearGradient>
</defs>
<rect width="100" height="100" fill="url(#g1)"/>
<rect x="0" y="2" width="27" height="6" rx="1" fill="#f5c24d"/><rect x="5" y="9" width="12" height="1.500" fill="#f0dcae"/>
<circle cx="53" cy="50" r="46.500" fill="#f7f5ee" stroke="#d9d3c4" stroke-width=".8"/>
<circle cx="53" cy="50" r="43" fill="#2f8c30" filter="url(#f1)"/>
<rect x="0" y="97.500" width="100" height="2.500" fill="#8a4a36"/>
<rect x="1.500" y="67" width="9" height="31" fill="#8b2626"/><rect x="2.700" y="73" width="6.600" height="17" fill="#f1ebe2"/><rect x="2.700" y="90" width="6.600" height="3" fill="#5b8a4a"/>
<path d="M100 68a32 32 0 0 0-32 32h32z" fill="#f8c829"/>
<text x="75" y="84" font-size="9.500" font-weight="bold" fill="#e1262a" textLength="22">免费</text>
<text x="75" y="96" font-size="9.500" font-weight="bold" fill="#e1262a" textLength="22">试喝</text>
<rect x="6" y="41" width="90" height="19" fill="#1c4f18" opacity=".3"/>
<text x="0" y="58.500" font-size="23" font-weight="bold" fill="#1f4a12" stroke="#1f4a12" stroke-width="2" opacity=".55" textLength="100" lengthAdjust="spacingAndGlyphs">39一斤送半斤</text>
<text x="0" y="58.500" font-size="23" font-weight="bold" fill="#e0f23c" textLength="100" lengthAdjust="spacingAndGlyphs">39一斤送半斤</text>
</svg></div>
<div class="abs td" style="left:695.5px;top:330px">茶叶类型2</div>
<div class="abs td" style="left:790.0px;top:330px">用户姓名1</div>
<div class="abs td" style="left:884.0px;top:328px">1646707556995</div>
<div class="abs td" style="left:1018.5px;top:328px">1</div>
<div class="abs td" style="left:1104.5px;top:328px">443.04</div>
<div class="abs td" style="left:1190.0px;top:330px">萨达</div>
<div class="abs td" style="left:1276.5px;top:328px">45a4sd</div>
<div class="abs td" style="left:1391.5px;top:330px">已发货</div>
<div class="abs td" style="left:1477.5px;top:330px">现金</div>
<div class="abs td" style="left:1563.5px;top:328px">2022-03-08 10:45:57</div>
<div class="abs btn" style="left:1730px;top:329px;border-radius:3px 0 0 3px">查看</div>
<div class="abs btn" style="left:1780px;top:329px;width:51px;border-radius:0 3px 3px 0">收货</div>
<div class="abs td" style="left:207.0px;top:454px">收货人4</div>
<div class="abs td" style="left:286.5px;top:452px">17703786904</div>
<div class="abs td" style="left:403.5px;top:454px">地址4</div>
<div class="abs td" style="left:467.5px;top:454px">茶叶名称5</div>
<div class="abs img" id="img2" style="left:563px;top:453px"><svg width="100" height="100" viewBox="0 0 100 100" font-family='"Liberation Sans", sans-serif'>
<defs>
<linearGradient id="g2" x1="0" y1="0" x2="1" y2="0"><stop offset="0" stop-color="#d6ecc8"/><stop offset=".3" stop-color="#f1f7ea"/><stop offset="1" stop-color="#cfe7c2"/></linearGradient>
<filter id="f2" x="0" y="0" width="1" height="1" color-interpolation-filters="sRGB"><feTurbulence type="fractalNoise" baseFrequency=".3" numOctaves="2" seed="2" result="n"/><feColorMatrix in="n" type="matrix" values=".8 0 0 0 -.18  1.1 0 0 0 -.1  .6 0 0 0 -.18  0 0 0 0 1" result="c"/><feComposite in="c" in2="SourceGraphic" operator="in"/></filter>
</defs>
<rect width="100" height="100" fill="url(#g2)"/>
<rect x="0" y="0" width="66" height="13" fill="#f7fbf3"/>
<text x="2" y="11" font-size="10.500" font-weight="bold" fill="#2a9a3c" textLength="60" lengthAdjust="spacingAndGlyphs">特级浓香毛尖</text>
<path d="M66 0h34v9.500H68.500a2.500 2.500 0 0 1-2.500-2.500z" fill="#d9333f"/><text x="69" y="7.500" font-size="6" fill="#fff" textLength="28">买1发3斤</text>
<rect x="1" y="15" width="30" height="6" rx="3" fill="#8b3fc4"/><rect x="1" y="22" width="34" height="6.500" rx="3" fill="#8b3fc4"/><rect x="4" y="17" width="22" height="2" fill="#d8b8f0"/><rect x="4" y="24" width="26" height="2.400" fill="#e6cff6"/>
<path d="M5 42h37v36c-10 3-27 3-37 0z" fill="#3f7f30" filter="url(#f2)"/><rect x="5" y="37" width="37" height="7" fill="#e4f0dc" opacity=".85"/><rect x="7" y="44" width="4" height="33" fill="#fff" opacity=".35"/><rect x="22" y="44" width="3" height="33" fill="#fff" opacity=".18"/><path d="M5 42h37v36c-10 3-27 3-37 0z" fill="#6f9a5a" opacity=".25"/>
<rect x="37" y="13" width="40" height="73" rx="2.500" fill="#3fa23a"/><rect x="37" y="13" width="40" height="5" rx="2" fill="#2f8c2f"/>
<rect x="37" y="19" width="40" height="17" fill="#cfe0b2"/><rect x="47" y="23" width="12" height="3" fill="#8aa86a"/><circle cx="49" cy="33" r="2" fill="#d9452f"/>
<text x="48" y="46" font-size="12" font-weight="bold" fill="#1f3a1a">毛</text><text x="48" y="61" font-size="12" font-weight="bold" fill="#1f3a1a">尖</text>
<rect x="42" y="65" width="30" height="1" fill="#8fd07f"/><ellipse cx="57" cy="76" rx="6" ry="2.500" fill="#1f5a22"/>
<path d="M76 52c-2-10-1-24 3-29 4-5 14-5 18 0 4 5 4 19 3 29z" fill="#1c1512"/>
<path d="M69 88c-2-16 2-32 10-40l5-3h8l6 3 2 4v36z" fill="#d8222d"/>
<ellipse cx="88" cy="32" rx="4.800" ry="6.200" fill="#f2cdb6"/>
<path d="M84.500 39h7l-1 6h-5z" fill="#f0c9b0"/>
<path d="M80 57l5-14 3 1-1 6-3 9zM96 57l-5-14-3 1 1 6 3 9z" fill="#f4d6c3"/>
<path d="M72 70c2-8 5-13 8-16l3 4c-3 5-5 10-6 16z" fill="#c41d28"/>
<rect x="0" y="80" width="100" height="20" fill="#e22a3a"/>
<path d="M36 80h64v10H40z" fill="#f2a0b8"/><rect x="46" y="83" width="50" height="4" fill="#e8577a" opacity=".7"/>
<path d="M0 77l36 3v8H0z" fill="#e22a3a"/>
<text x="9" y="93" font-size="19" font-weight="bold" font-style="italic" fill="#fff" stroke="#fff" stroke-width=".5">34</text>
<text x="37" y="97.500" font-size="6.500" font-weight="bold" fill="#f8d83a" textLength="60" lengthAdjust="spacingAndGlyphs">前2000件第2件半价</text>
<rect x="2" y="95" width="28" height="1.500" fill="#f6b0b8"/>
<rect x=".5" y=".5" width="99" height="99" fill="none" stroke="#e8333a" stroke-width="1"/>
</svg></div>
<div class="abs td" style="left:695.5px;top:454px">茶叶类型3</div>
<div class="abs td" style="left:790.0px;top:454px">用户姓名1</div>
<div class="abs td" style="left:884.0px;top:452px">1646707556995</div>
<div class="abs td" style="left:1018.5px;top:452px">1</div>
<div class="abs td" style="left:1104.5px;top:452px">68.38</div>
<div class="abs td" style="left:1190.0px;top:452px">s</div>
<div class="abs td" style="left:1276.5px;top:452px">1234</div>
<div class="abs td" style="left:1391.5px;top:454px">已发货</div>
<div class="abs td" style="left:1477.5px;top:454px">现金</div>
<div class="abs td" style="left:1563.5px;top:452px">2022-03-08 10:45:57</div>
<div class="abs btn" style="left:1730px;top:453px;border-radius:3px 0 0 3px">查看</div>
<div class="abs btn" style="left:1780px;top:453px;width:51px;border-radius:0 3px 3px 0">收货</div>
<div class="abs td" style="left:207.0px;top:579px">收货人4</div>
<div class="abs td" style="left:286.5px;top:577px">17703786904</div>
<div class="abs td" style="left:403.5px;top:579px">地址4</div>
<div class="abs td" style="left:467.5px;top:579px">茶叶名称1</div>
<div class="abs img" id="img3" style="left:563px;top:578px"><svg width="100" height="100"><use href="#tea3"/></svg></div>
<div class="abs td" style="left:695.5px;top:579px">茶叶类型4</div>
<div class="abs td" style="left:790.0px;top:579px">用户姓名1</div>
<div class="abs td" style="left:884.0px;top:577px">1646707556995</div>
<div class="abs td" style="left:1018.5px;top:577px">2</div>
<div class="abs td" style="left:1104.5px;top:577px">462.78</div>
<div class="abs td" style="left:1391.5px;top:579px">已支付</div>
<div class="abs td" style="left:1477.5px;top:579px">现金</div>
<div class="abs td" style="left:1563.5px;top:577px">2022-03-08 10:45:57</div>
<div class="abs btn" style="left:1730px;top:578px;border-radius:3px 0 0 3px">查看</div>
<div class="abs btn" style="left:1780px;top:578px;width:51px;border-radius:0 3px 3px 0">退款</div>
<div class="abs td" style="left:207.0px;top:703px">收货人5</div>
<div class="abs td" style="left:286.5px;top:701px">17703786905</div>
<div class="abs td" style="left:403.5px;top:703px">地址5</div>
<div class="abs td" style="left:467.5px;top:703px">茶叶名称1</div>
<div class="abs img" id="img4" style="left:563px;top:702px"><svg width="100" height="100"><use href="#tea3"/></svg></div>
<div class="abs td" style="left:695.5px;top:703px">茶叶类型4</div>
<div class="abs td" style="left:790.0px;top:703px">用户姓名1</div>
<div class="abs td" style="left:884.0px;top:701px">1646707296457</div>
<div class="abs td" style="left:1018.5px;top:701px">1</div>
<div class="abs td" style="left:1104.5px;top:701px">231.39</div>
<div class="abs td" style="left:1391.5px;top:703px">已支付</div>
<div class="abs td" style="left:1477.5px;top:703px">现金</div>
<div class="abs td" style="left:1563.5px;top:701px">2022-03-08 10:41:37</div>
<div class="abs btn" style="left:1730px;top:702px;border-radius:3px 0 0 3px">查看</div>
<div class="abs btn" style="left:1780px;top:702px;width:51px;border-radius:0 3px 3px 0">退款</div>
<div class="abs" style="left:168px;top:831px;width:48px;height:20px;border:1px solid #767676;border-radius:2.500px;background:#fff"></div>
<div class="abs" style="left:173px;top:831px;font-size:14px;line-height:20px;color:#111">10</div>
<svg class="abs" style="left:201px;top:837.500px" width="11" height="7.700" viewBox="0 0 10 7"><path d="M1 1l4 4.200L9 1" fill="none" stroke="#111" stroke-width="2"/></svg>
<div class="abs fl" style="left:220px;top:831px;font-size:14px">条 每页</div>
<div class="abs" style="left:1820px;top:852px;width:32px;height:33px;background:#3672e9;color:#fff;font-size:12px;line-height:33px;text-align:center">1</div>
<!--PAGE-CONTENT-->
</div>
<div id="scroll" class="abs"></div>

<!-- scrollbar -->
<div class="abs" style="left:1909px;top:101px;width:2px;height:967px;background:#fbfbfc"></div>
<div class="abs" style="left:1911px;top:118px;width:9px;height:795px;background:#c1c1c4"></div>
<svg class="abs" style="left:1912px;top:107px" width="8" height="5" viewBox="0 0 8 5"><path d="M0 5L5.500 0 11 5z" fill="#8a8a8c"/></svg>
<svg class="abs" style="left:1912px;top:1057px" width="8" height="5" viewBox="0 0 8 5"><path d="M0 0h11L5.500 5z" fill="#505050"/></svg>
<!-- cursor highlight -->
<div class="abs" style="left:102px;top:473px;width:47px;height:47px;border-radius:50%;background:#f4767d"></div>
<svg class="abs" style="left:124px;top:495px" width="16" height="22" viewBox="0 0 16 22"><path d="M2 2.500v16l3.800-3.400 2.300 5 2.300-1-2.300-4.900 5-.4z" fill="#f4767d" stroke="#7c0d15" stroke-width="1.500" stroke-linejoin="round"/></svg>
<!-- watermark -->

<svg class="abs" style="left:1540px;top:925px" width="290" height="90" viewBox="0 0 290 90" font-family='"Liberation Sans", sans-serif' font-weight="bold" font-size="61" stroke-linejoin="round">
<text x="14" y="68.500" textLength="256" fill="#a0a0a0" stroke="#a0a0a0" stroke-width="9">毕设代做</text>
<text x="14" y="68.500" textLength="256" fill="#fff" stroke="#fff" stroke-width="7.500">毕设代做</text>
<text x="14" y="68.500" textLength="256" fill="#060606" stroke="#060606" stroke-width="3.200">毕设代做</text>
</svg>
<!--OVERLAYS-->
</div>
</body>
</html>
